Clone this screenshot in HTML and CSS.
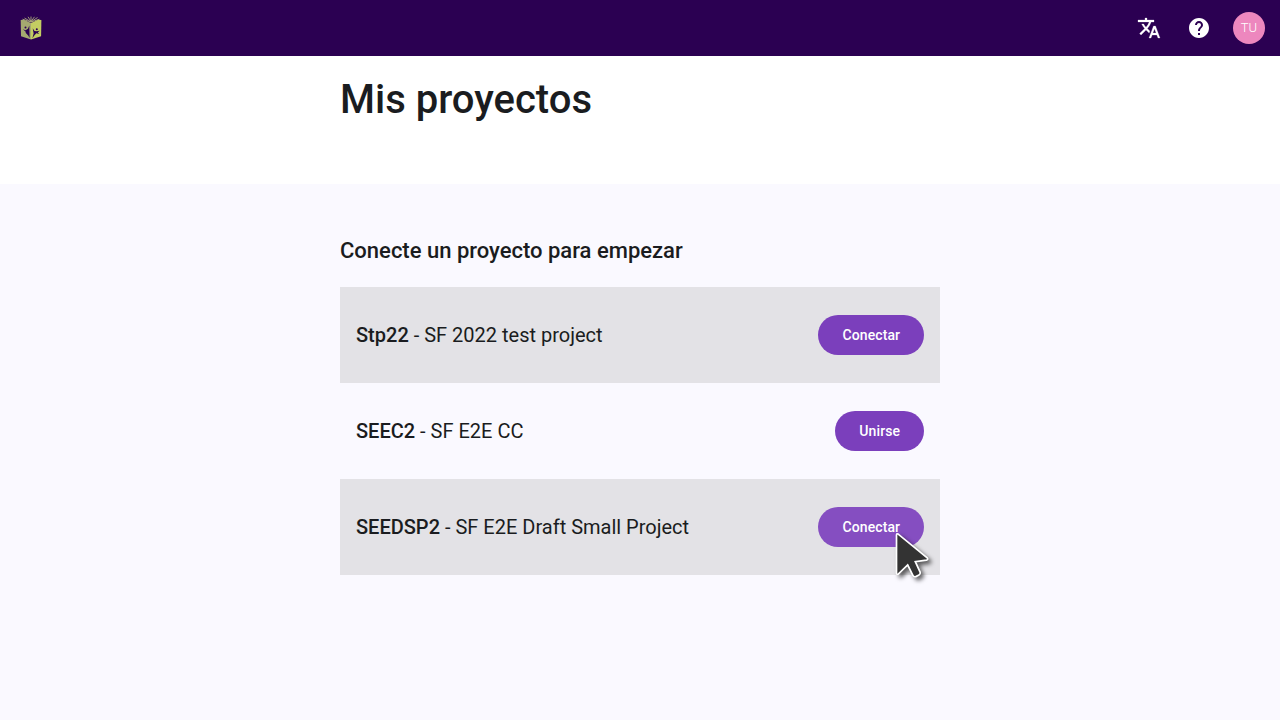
FILE: index.html
```html
<!DOCTYPE html>
<html lang="es">
<head>
<meta charset="utf-8">
<title>Mis proyectos</title>
<link rel="stylesheet" href="styles.css">
</head>
<body>
<header class="toolbar">
  <svg class="logo" width="22" height="24" viewBox="0 0 22 24" aria-hidden="true">
    <path d="M2.500 3.200 11 6l8.500-2.800M4.500 2l6 3.500M8 .8l3 4.700M14.500.8 11 5.500M17.500 1.500l-6 4M11 .5v5" fill="none" stroke="#b9be80" stroke-width=".8"/>
    <path d="M.7 4 4 3.800 11 7v16.500L1 20.300z" fill="#a5a970"/>
    <path d="M11 7l7-3.200 3.400.2-.3 16.300L11 23.500z" fill="#c3cd62"/>
    <path d="M2.800 13.200 5.500 14.200 8 12.800 9.300 9.500 9.600 22 8.200 19.500 5.800 17 5.500 15.500z" fill="#2b0052"/>
    <path d="M12.700 12.300 14.500 15 16.500 15.300 19.700 14.800 17.800 16.500 19.300 18 16.300 17.300 14.300 19.500 12.400 22.200 13.600 17.500z" fill="#2b0052"/>
    <circle cx="5.500" cy="11.500" r="1" fill="#2b0052"/>
    <circle cx="16.800" cy="13.200" r="1" fill="#2b0052"/>
  </svg>
  <nav class="actions">
    <svg class="icon translate" viewBox="0 0 24 24" role="img" aria-label="Idioma"><path d="M12.870 15.070l-2.540-2.510.03-.03c1.740-1.940 2.980-4.170 3.710-6.530H17V4h-7V2H8v2H1v1.990h11.170C11.500 7.920 10.440 9.750 9 11.350 8.070 10.320 7.300 9.190 6.690 8h-2c.73 1.630 1.730 3.170 2.980 4.560l-5.090 5.020L4 19l5-5 3.110 3.110.76-2.040zM18.500 10h-2L12 22h2l1.120-3h4.750L21 22h2l-4.500-12zm-2.620 7l1.620-4.330L19.120 17h-3.240z"/></svg>
    <svg class="icon" viewBox="0 0 24 24" role="img" aria-label="Ayuda"><path d="M12 2C6.480 2 2 6.480 2 12s4.480 10 10 10 10-4.480 10-10S17.520 2 12 2zm1 17h-2v-2h2v2zm2.070-7.750l-.9.920C13.450 12.900 13 13.500 13 15h-2v-.5c0-1.100.45-2.100 1.170-2.830l1.240-1.260c.37-.36.59-.86.59-1.410 0-1.100-.9-2-2-2s-2 .9-2 2H8c0-2.210 1.790-4 4-4s4 1.790 4 4c0 .88-.36 1.680-.93 2.250z"/></svg>
    <span class="avatar">TU</span>
  </nav>
</header>
<div class="title-band"><h1 class="title">Mis proyectos</h1></div>
<main class="content">
  <h2 class="subtitle">Conecte un proyecto para empezar</h2>
  <div class="project shaded"><span><b class="code">Stp22</b> - SF 2022 test project</span><button class="btn">Conectar</button></div>
  <div class="project"><span><b class="code">SEEC2</b> - SF E2E CC</span><button class="btn">Unirse</button></div>
  <div class="project shaded"><span><b class="code">SEEDSP2</b> - SF E2E Draft Small Project</span><button class="btn hovered">Conectar</button></div>
</main>
<svg class="pointer" width="48" height="56" viewBox="0 0 48 56" aria-hidden="true"><path d="M6.500 9Q6.700 7.200 8.200 8.100L37.200 31.800Q38.500 33.500 36.500 34.100L25.300 35.700 30.200 46.300Q30.600 48.200 29 49L25.800 50.600Q23.800 51.200 23 49.500L17.700 39 8.500 47.900Q6.700 48.900 6.500 47z" fill="#333" stroke="#fff" stroke-width="1.700"/></svg>
</body>
</html>
```
FILE: styles.css
```css
body {
  margin: 0;
  min-height: 720px;
  background: #faf9ff;
  color: #1a1c20;
  font-family: Roboto, sans-serif;
}
.toolbar {
  display: flex;
  align-items: center;
  justify-content: space-between;
  box-sizing: border-box;
  height: 56px;
  padding: 0 15px 0 20px;
  background: #2b0052;
}
.actions { display: flex; align-items: center; }
.icon { width: 24px; height: 24px; margin-right: 26px; fill: #fff; }
.icon + .icon { margin-right: 22px; }
.translate { stroke: #fff; stroke-width: .25; }
.avatar {
  width: 32px;
  height: 32px;
  border-radius: 50%;
  background: #ed87be;
  color: #fff;
  font-size: 13px;
  font-weight: 300;
  line-height: 32px;
  text-align: center;
}
.title-band { height: 128px; background: #fff; }
.title {
  width: 600px;
  margin: 0 auto;
  padding-top: 18px;
  font-size: 40px;
  font-weight: 500;
  line-height: 52px;
}
.content { width: 600px; margin: 0 auto; padding-top: 53px; }
.subtitle {
  margin: 0 0 22px;
  font-size: 22px;
  font-weight: 500;
  line-height: 28px;
}
.project {
  display: flex;
  align-items: center;
  justify-content: space-between;
  box-sizing: border-box;
  height: 96px;
  padding: 0 16px;
  font-size: 20px;
}
.shaded { background: #e3e2e6; }
.code { font-weight: 500; }
.btn {
  height: 40px;
  padding: 0 23.900px 0 24.100px;
  border: 0;
  border-radius: 20px;
  background: #7b3fbc;
  color: #fff;
  font: 500 14px Roboto, sans-serif;
  letter-spacing: .1px;
}
.hovered { background: #854ec1; }
.pointer {
  position: absolute;
  left: 890px;
  top: 526px;
  filter: drop-shadow(3px 3px 2px rgba(0, 0, 0, .6));
}
```
